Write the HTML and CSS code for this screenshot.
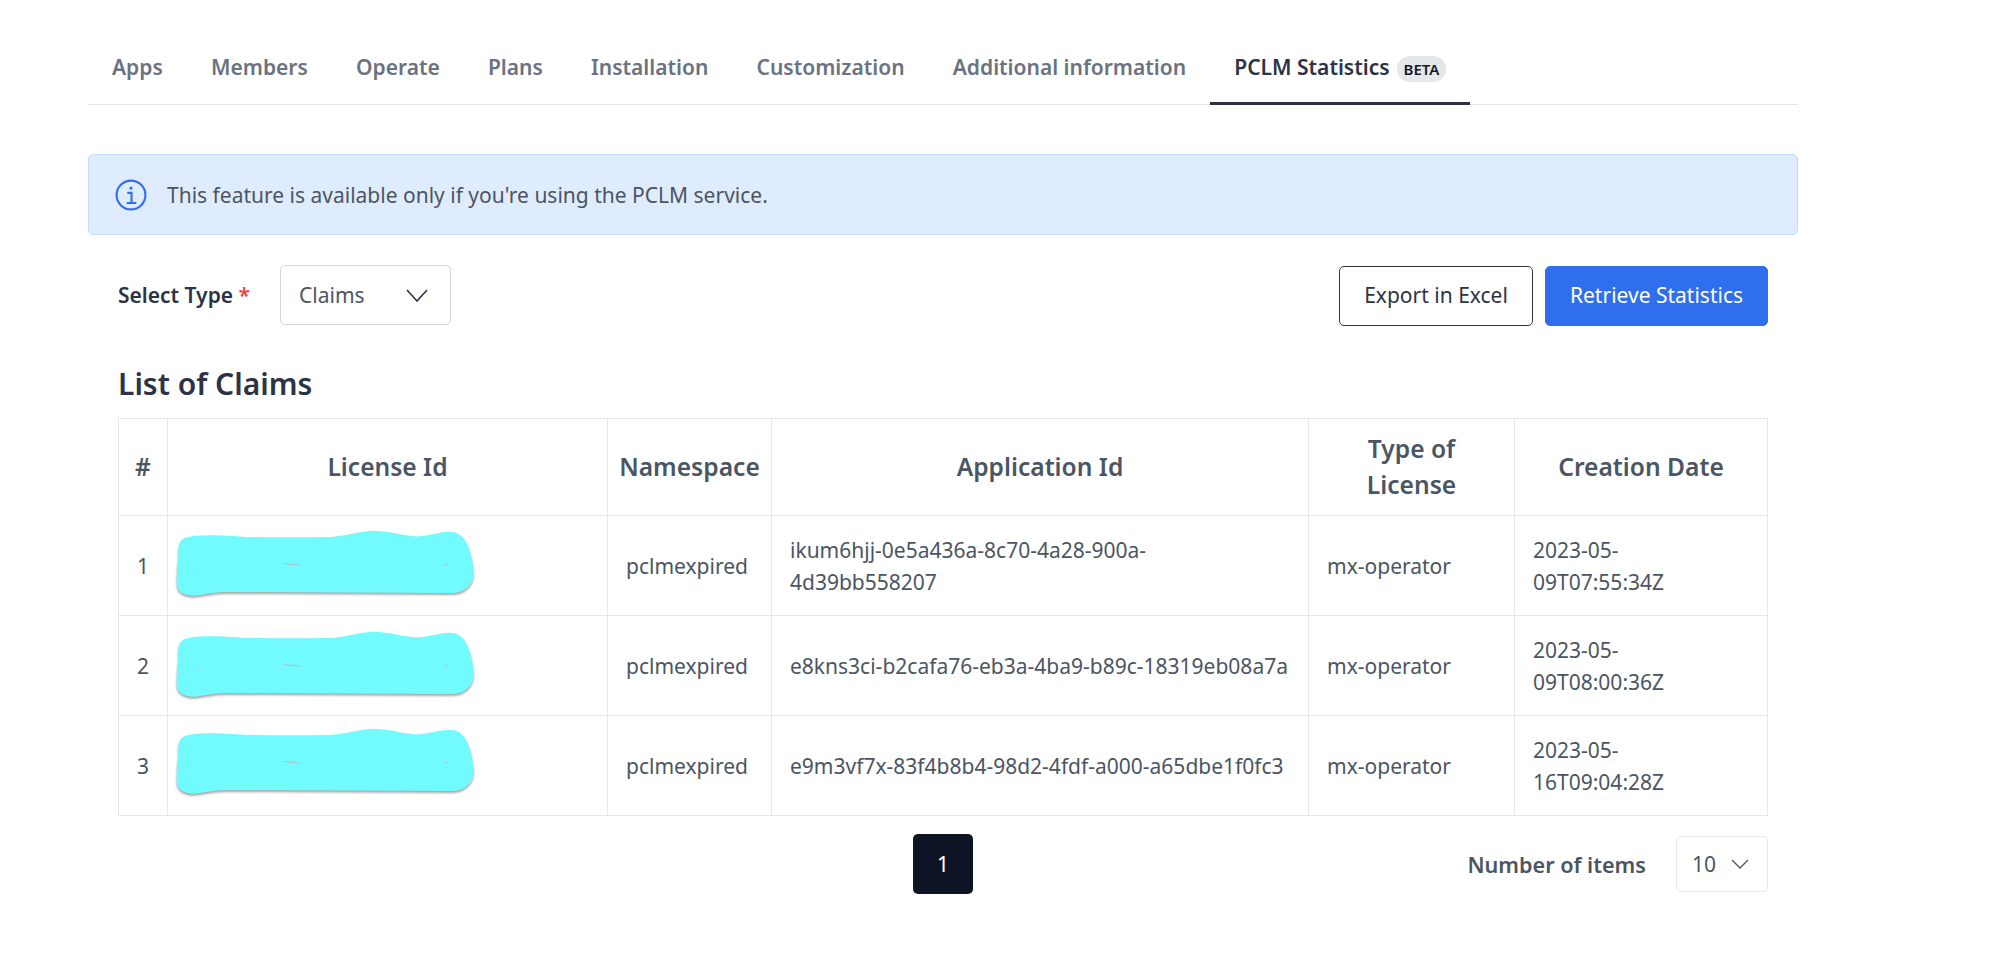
FILE: index.html
```html
<!DOCTYPE html>
<html lang="en">

<head>
    <meta charset="UTF-8">
    <meta name="viewport" content="width=device-width, initial-scale=1.0">
    <title>PCLM Statistics</title>
    <link rel="stylesheet" href="styles.css">
</head>

<body>
    <svg class="defs" width="0" height="0">
        <symbol id="scribble" viewBox="0 0 900 210">
            <path fill="#72fbff" d="M30 30 C60 20 120 20 215 27 C300 28 400 28 465 27 C510 25 560 8 595 8 C640 8 700 27 735 25 C760 22 800 11 825 11 C860 11 880 40 890 90 C898 130 900 150 885 170 C870 190 850 195 825 195 L155 192 C110 192 80 203 55 203 C25 203 5 190 5 165 C5 130 8 110 10 85 C8 60 12 35 30 30Z" />
            <path fill="#b9b9b9" d="M315 105 C335 106 365 108 385 113 C360 112 335 110 315 105Z M65 123 L75 126 L68 127Z M808 110 L818 107 L816 113Z" />
        </symbol>
    </svg>

    <div class="container">
        <nav class="tabs">
            <a class="tab">Apps</a>
            <a class="tab">Members</a>
            <a class="tab">Operate</a>
            <a class="tab">Plans</a>
            <a class="tab">Installation</a>
            <a class="tab">Customization</a>
            <a class="tab">Additional information</a>
            <a class="tab active">PCLM Statistics <span class="badge">BETA</span></a>
        </nav>

        <div class="alert">
            <svg class="info-icon" viewBox="0 0 30 30" fill="none" stroke="#2f6fed" stroke-width="2">
                <circle cx="15" cy="15" r="13.5" />
                <circle cx="15" cy="8.5" r="1.5" fill="#2f6fed" stroke="none" />
                <path d="M11.5 13 H15.5 V22 M11 22.5 H20" />
            </svg>
            <span>This feature is available only if you're using the PCLM service.</span>
        </div>

        <div class="content">
            <div class="toolbar">
                <label class="type-label">Select Type <span class="required">*</span></label>
                <div class="select type-select">
                    <span>Claims</span>
                    <svg class="chevron" viewBox="0 0 22 13" fill="none" stroke="#2d3344" stroke-width="1.6">
                        <path d="M1 1 L11 12 L21 1" />
                    </svg>
                </div>
                <div class="actions">
                    <button class="btn btn-outline">Export in Excel</button>
                    <button class="btn btn-primary">Retrieve Statistics</button>
                </div>
            </div>

            <h2>List of Claims</h2>

            <table id="claimList">
                <colgroup>
                    <col class="col-num">
                    <col class="col-license">
                    <col class="col-ns">
                    <col class="col-app">
                    <col class="col-type">
                    <col class="col-date">
                </colgroup>
                <thead>
                    <tr>
                        <th>#</th>
                        <th>License Id</th>
                        <th>Namespace</th>
                        <th>Application Id</th>
                        <th class="th-type">Type of License</th>
                        <th>Creation Date</th>
                    </tr>
                </thead>
                <tbody>
                    <tr>
                        <td class="num">1</td>
                        <td class="license"><svg class="scribble row-1"><use href="#scribble" /></svg></td>
                        <td>pclmexpired</td>
                        <td>ikum6hjj-0e5a436a-8c70-4a28-900a-4d39bb558207</td>
                        <td>mx-operator</td>
                        <td class="date">2023-05-09T07:55:34Z</td>
                    </tr>
                    <tr>
                        <td class="num">2</td>
                        <td class="license"><svg class="scribble row-2"><use href="#scribble" /></svg></td>
                        <td>pclmexpired</td>
                        <td>e8kns3ci-b2cafa76-eb3a-4ba9-b89c-18319eb08a7a</td>
                        <td>mx-operator</td>
                        <td class="date">2023-05-09T08:00:36Z</td>
                    </tr>
                    <tr>
                        <td class="num">3</td>
                        <td class="license"><svg class="scribble row-3"><use href="#scribble" /></svg></td>
                        <td>pclmexpired</td>
                        <td>e9m3vf7x-83f4b8b4-98d2-4fdf-a000-a65dbe1f0fc3</td>
                        <td>mx-operator</td>
                        <td class="date">2023-05-16T09:04:28Z</td>
                    </tr>
                </tbody>
            </table>

            <div class="footer">
                <div></div>
                <button class="page">1</button>
                <div class="items">
                    <span class="items-label">Number of items</span>
                    <div class="select items-select">
                        <span>10</span>
                        <svg class="chevron-small" viewBox="0 0 18 10" fill="none" stroke="#4b5563" stroke-width="1.3">
                            <path d="M1 1 L9 9 L17 1" />
                        </svg>
                    </div>
                </div>
            </div>
        </div>
    </div>
</body>

</html>
```

FILE: styles.css
```css
body {
    font-family: 'Noto Sans', sans-serif;
    font-size: 21px;
    color: #4b5563;
    background-color: #fff;
    margin: 0;
    padding: 0;
}

.defs {
    display: block;
    height: 0;
}

.container {
    width: 1710px;
    margin-left: 88px;
    padding-top: 49px;
}

.tabs {
    display: flex;
    height: 56px;
    box-sizing: border-box;
    gap: 48.2px;
    padding: 0 24px;
    border-bottom: 1px solid #e5e7eb;
}

.tab {
    font-weight: 600;
    line-height: 36px;
    color: #6b7280;
    white-space: nowrap;
}

.tab.active {
    display: flex;
    align-items: flex-start;
    gap: 7px;
    height: 56px;
    box-sizing: border-box;
    margin: 0 -24px;
    padding: 0 24px;
    color: #2d3344;
    border-bottom: 3px solid #2d3344;
}

.badge {
    margin-top: 7px;
    padding: 0 7px;
    height: 26px;
    line-height: 27px;
    font-size: 15px;
    font-weight: 600;
    color: #111827;
    background-color: #e5e7eb;
    border-radius: 13px;
}

.alert {
    display: flex;
    align-items: center;
    gap: 20px;
    height: 81px;
    box-sizing: border-box;
    margin-top: 49px;
    padding-left: 26px;
    background-color: #dfecfd;
    border: 1px solid #bfdbfe;
    border-radius: 5px;
}

.info-icon {
    width: 32px;
    height: 32px;
}

.content {
    padding: 0 30px;
}

.toolbar {
    display: flex;
    align-items: flex-start;
    height: 61px;
    margin-top: 30px;
}

.type-label {
    width: 162px;
    line-height: 60px;
    font-weight: 600;
    color: #2d3344;
}

.required {
    color: #ef4444;
}

.select {
    display: flex;
    align-items: center;
    justify-content: space-between;
    box-sizing: border-box;
    border: 1px solid #d1d5db;
    border-radius: 5px;
}

.type-select {
    width: 171px;
    height: 60px;
    padding: 0 22px 0 18px;
}

.chevron {
    width: 22px;
    height: 13px;
}

.actions {
    display: flex;
    gap: 12px;
    margin-left: auto;
    align-self: flex-end;
}

.btn {
    height: 60px;
    font-family: inherit;
    font-size: 21px;
    border-radius: 5px;
    padding: 0 0 2px;
}

.btn-outline {
    width: 194px;
    color: #2d3344;
    background-color: #fff;
    border: 1px solid #2d3344;
}

.btn-primary {
    width: 223px;
    color: #fff;
    background-color: #2f6fed;
    border: 1px solid #2f6fed;
}

h2 {
    margin: 39px 0 15px;
    font-size: 30px;
    line-height: 38px;
    font-weight: 600;
    color: #2d3344;
}

#claimList {
    width: 100%;
    table-layout: fixed;
    border-collapse: collapse;
}

.col-num {
    width: 49px;
}

.col-license {
    width: 440px;
}

.col-ns {
    width: 164px;
}

.col-app {
    width: 537px;
}

.col-type {
    width: 206px;
}

th,
td {
    padding: 0 18px;
    border: 1px solid #e5e7eb;
    text-align: left;
    line-height: 32px;
}

th {
    height: 96px;
    padding: 0 8px;
    font-size: 24.6px;
    line-height: 36px;
    font-weight: 600;
    text-align: center;
}

th.th-type {
    padding: 0 24px;
}

tbody tr {
    height: 100px;
}

td.num {
    padding: 0;
    text-align: center;
}

td.license {
    padding: 0 0 0 7px;
    vertical-align: top;
}

td.date {
    padding-right: 40px;
}

.scribble {
    display: block;
    width: 300px;
    height: 70px;
    filter: drop-shadow(0 2px 1px rgba(0, 0, 0, 0.35));
}

.row-1 {
    margin-top: 12px;
}

.row-2 {
    margin-top: 13px;
}

.row-3 {
    margin-top: 10px;
}

.footer {
    display: grid;
    grid-template-columns: 1fr auto 1fr;
    align-items: center;
    margin-top: 18px;
}

.page {
    width: 60px;
    height: 60px;
    padding: 0;
    font-family: inherit;
    font-size: 21px;
    color: #fff;
    background-color: #0d1524;
    border: none;
    border-radius: 5px;
}

.items {
    display: flex;
    align-items: center;
    justify-content: flex-end;
    gap: 30px;
}

.items-label {
    font-size: 21.6px;
    font-weight: 600;
}

.items-select {
    width: 92px;
    height: 56px;
    padding: 0 18px 0 15px;
    border-color: #e5e7eb;
}

.chevron-small {
    width: 18px;
    height: 10px;
}
```
